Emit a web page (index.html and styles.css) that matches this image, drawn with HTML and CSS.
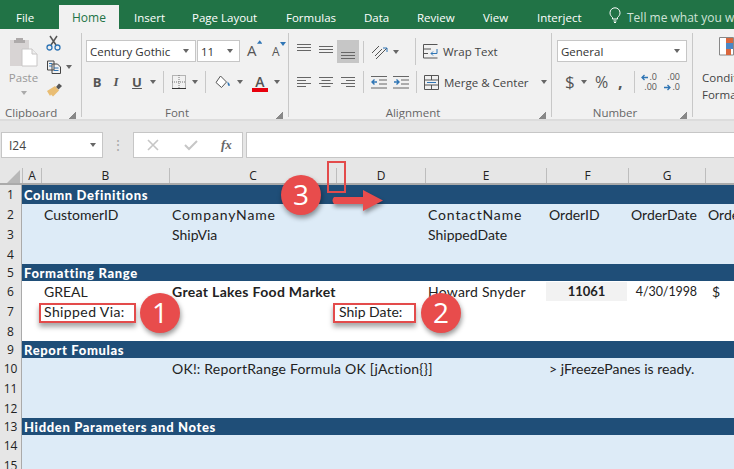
FILE: index.html
```html
<!DOCTYPE html>
<html lang="en">
<head>
<meta charset="utf-8">
<title>Excel worksheet</title>
<link rel="stylesheet" href="styles.css">
</head>
<body>
<div class="app">
  <nav class="tabs">
    <span class="tab tab-file">File</span>
    <span class="tab tab-home">Home</span>
    <span class="tab">Insert</span>
    <span class="tab">Page Layout</span>
    <span class="tab">Formulas</span>
    <span class="tab">Data</span>
    <span class="tab">Review</span>
    <span class="tab">View</span>
    <span class="tab">Interject</span>
    <span class="tab tab-tell">
      <svg width="12" height="16" viewBox="0 0 12 16" fill="none" stroke="#fff"><path d="M3.5 10.5C2 9 1 8 1 5.8A5 5 0 0 1 11 5.8C11 8 10 9 8.500 10.500V12H3.500ZM4.500 14H7.500M5 15.500H7"/></svg>
      <span>Tell me what you want to do</span>
    </span>
  </nav>

  <section class="ribbon">
    <div class="group g-clip">
      <div class="gbody clip-body">
        <div class="paste">
          <svg width="29" height="30" viewBox="0 0 29 30"><path d="M1 3H20V29H1Z" fill="#d8d4d4"/><path d="M7 3V1H14V3H16V6H5V3Z" fill="#aeaaaa"/><path d="M13 12H23L28 17V29H13Z" fill="#fff" stroke="#c8c6c6"/><path d="M23 12V17H28" fill="#eee" stroke="#c8c6c6"/></svg>
          <span class="paste-label">Paste</span>
          <i class="caret caret-pale"></i>
        </div>
        <div class="clip-tools">
          <svg width="15" height="16" viewBox="0 0 15 16" fill="none"><path d="M4 1L10 10M11 1L5 10" stroke="#555" stroke-width="1.500"/><circle cx="3.500" cy="12.500" r="2.500" stroke="#2f75b5" stroke-width="1.300"/><circle cx="11.500" cy="12.500" r="2.500" stroke="#2f75b5" stroke-width="1.300"/></svg>
          <div class="tool-line">
            <svg width="16" height="14" viewBox="0 0 16 14" fill="none" stroke="#444"><path d="M1.500 1H8V10H1.500ZM6 4H11.500L14.500 7V13.500H6Z" fill="#f1f1f1"/><path d="M3 3.500H6M3 6H6M8 8H12.500M8 10.500H12.500" stroke="#2f75b5"/></svg>
            <i class="caret"></i>
          </div>
          <svg class="painter" width="17" height="15" viewBox="0 0 17 15"><path d="M10 5L13 1.500 16 4 12.500 7.500Z" fill="#555"/><path d="M1 9L9 4 13 8.500 7 14.500 5 12.500 4 14 Z" fill="#e9bd73"/></svg>
        </div>
      </div>
      <div class="glabel">Clipboard<i class="launch"></i></div>
    </div>

    <div class="group g-font">
      <div class="gbody stack">
        <div class="rline font-top">
          <div class="combo combo-font"><span>Century Gothic</span><i class="caret"></i></div>
          <div class="combo combo-size"><span>11</span><i class="caret"></i></div>
          <div class="growers">
            <span class="grow">A<svg width="6" height="4" viewBox="0 0 6 4"><path d="M0 4L3 0 6 4Z" fill="#2f75b5"/></svg></span>
            <span class="grow grow-small">A<svg width="6" height="4" viewBox="0 0 6 4"><path d="M0 0L3 4 6 0Z" fill="#2f75b5"/></svg></span>
          </div>
        </div>
        <div class="rline font-bottom">
          <b class="fmt fmt-b">B</b>
          <span class="fmt fmt-i">I</span>
          <span class="fmt fmt-u">U</span>
          <i class="caret"></i>
          <i class="vsep"></i>
          <svg class="icon-borders" width="14" height="14" viewBox="0 0 14 14" fill="none" stroke="#777" stroke-dasharray="1 1"><path d="M.5.500H13.500V13.500H.5ZM7 0V14M0 7H14"/><path d="M0 13.500H14" stroke="#333" stroke-dasharray="none"/></svg>
          <i class="caret"></i>
          <i class="vsep"></i>
          <svg class="icon-fill" width="16" height="14" viewBox="0 0 16 14"><path d="M5.500 1L11.500 7 6.500 12.500 1 7.500Z" fill="#fff" stroke="#555"/><path d="M12.500 6.500C14 8 15.500 9.500 14.500 11 13 11.500 12.500 9 12.500 6.500Z" fill="#2f75b5"/></svg>
          <i class="caret"></i>
          <span class="font-color">A<i></i></span>
          <i class="caret"></i>
        </div>
      </div>
      <div class="glabel">Font<i class="launch"></i></div>
    </div>

    <div class="group g-align">
      <div class="gbody stack">
        <div class="rline align-top">
          <svg class="al al-t" width="14" height="8" viewBox="0 0 14 8" stroke="#666"><path d="M0 .5H14M0 3.500H14M0 6.500H14"/></svg>
          <svg class="al al-mid" width="14" height="8" viewBox="0 0 14 8" stroke="#666"><path d="M0 .5H14M0 3.500H14M0 6.500H14"/></svg>
          <span class="al-active"><svg width="14" height="8" viewBox="0 0 14 8" stroke="#666"><path d="M0 .5H14M0 3.500H14M0 6.500H14"/></svg></span>
          <i class="vsep"></i>
          <svg class="orient" width="18" height="16" viewBox="0 0 18 16" fill="none" stroke="#555"><path d="M1 9L8 2M4 12L11 5M5 15L16 4"/><path d="M16 4V8M16 4H12" stroke="#2f75b5"/></svg>
          <i class="caret"></i>
          <i class="vsep vsep-tall"></i>
          <svg class="wrap-icon" width="15" height="15" viewBox="0 0 15 15" fill="none" stroke="#555"><path d="M.5.500H14.500M.5 5H8M.5 9.500H5M.5 14H14.500M.5.500V14"/><path d="M14 5V9.500H8M10 7.500L8 9.500 10 11.500" stroke="#2f75b5"/></svg>
          <span class="rtext">Wrap Text</span>
        </div>
        <div class="rline align-bottom">
          <svg class="al" width="14" height="11" viewBox="0 0 14 11" stroke="#666"><path d="M0 .5H14M0 3.500H9M0 6.500H14M0 9.500H9"/></svg>
          <svg class="al al-gap" width="14" height="11" viewBox="0 0 14 11" stroke="#666"><path d="M0 .5H14M2.500 3.500H11.500M0 6.500H14M2.500 9.500H11.500"/></svg>
          <svg class="al al-gap" width="14" height="11" viewBox="0 0 14 11" stroke="#666"><path d="M0 .5H14M5 3.500H14M0 6.500H14M5 9.500H14"/></svg>
          <i class="vsep vsep-al"></i>
          <svg class="indent" width="16" height="13" viewBox="0 0 16 13" fill="none" stroke="#666"><path d="M0 .5H16M8 4H16M8 8H16M0 12H16"/><path d="M6 6H1M3.500 3.500L1 6 3.500 8.500" stroke="#2f75b5" stroke-width="1.400"/></svg>
          <svg class="indent indent-2" width="16" height="13" viewBox="0 0 16 13" fill="none" stroke="#666"><path d="M0 .5H16M8 4H16M8 8H16M0 12H16"/><path d="M1 6H6M3.500 3.500L6 6 3.500 8.500" stroke="#2f75b5" stroke-width="1.400"/></svg>
          <i class="vsep vsep-tall2"></i>
          <svg class="wrap-icon" width="15" height="15" viewBox="0 0 15 15" fill="none" stroke="#555"><path d="M.5.500H14.500V14.500H.5ZM.5 5H14.500M.5 10H14.500M7.500.500V5M7.500 10V14.500"/><path d="M3 7.500H12" stroke="#2f75b5"/></svg>
          <span class="rtext">Merge &amp; Center</span>
          <i class="caret caret-merge"></i>
        </div>
      </div>
      <div class="glabel">Alignment<i class="launch"></i></div>
    </div>

    <div class="group g-num">
      <div class="gbody stack">
        <div class="rline num-top"><div class="combo combo-num"><span>General</span><i class="caret"></i></div></div>
        <div class="rline num-bottom">
          <span class="sym sym-dollar">$</span>
          <i class="caret"></i>
          <span class="sym sym-pct">%</span>
          <b class="sym sym-comma">,</b>
          <i class="vsep"></i>
          <span class="dec">
            <span class="dec-line"><svg width="7" height="7" viewBox="0 0 7 7" fill="none" stroke="#2f75b5" stroke-width="1.300"><path d="M7 3.500H1M3.500 1L1 3.500 3.500 6"/></svg>.0</span>
            <span class="dec-line">.00</span>
          </span>
          <span class="dec dec-2">
            <span class="dec-line">.00</span>
            <span class="dec-line"><svg width="7" height="7" viewBox="0 0 7 7" fill="none" stroke="#2f75b5" stroke-width="1.300"><path d="M0 3.500H6M3.500 1L6 3.500 3.500 6"/></svg>.0</span>
          </span>
        </div>
      </div>
      <div class="glabel">Number<i class="launch"></i></div>
    </div>

    <div class="group g-styles">
      <svg class="cf-icon" width="15" height="24" viewBox="0 0 15 24"><path d="M.5.500H14.500V18H.5Z" fill="#fff" stroke="#888"/><path d="M7 1H14V6H7Z" fill="#d9673e"/><path d="M7 6H14V12H7Z" fill="#4a86c5"/><path d="M7 12H12V18H7Z" fill="#d9673e"/></svg>
      <span class="cf-text">Conditional<br>Formatting</span>
    </div>
  </section>

  <section class="formula-bar">
    <div class="namebox"><span>I24</span><i class="caret"></i></div>
    <span class="dots">⋮</span>
    <div class="fx-box">
      <svg width="12" height="12" viewBox="0 0 12 12" stroke="#c6c6c6" stroke-width="1.600"><path d="M1 1L11 11M11 1L1 11"/></svg>
      <svg width="14" height="12" viewBox="0 0 14 12" fill="none" stroke="#c6c6c6" stroke-width="2"><path d="M1 6L5 10 13 2"/></svg>
      <em>fx</em>
    </div>
    <div class="formula-input"></div>
  </section>

  <section class="sheet">
    <div class="row head-row">
      <span class="corner"><svg width="13" height="13" viewBox="0 0 13 13"><path d="M13 0V13H0Z" fill="#b8b8b8"/></svg></span>
      <span class="ch">A</span><span class="ch">B</span><span class="ch">C</span><span class="ch">D</span><span class="ch">E</span><span class="ch">F</span><span class="ch">G</span><span class="ch ch-last"></span>
    </div>
    <div class="row band h19"><span class="rh">1</span><span class="band-title">Column Definitions</span></div>
    <div class="row light">
      <span class="rh">2</span><span class="c c-b">CustomerID</span><span class="c c-c wide">CompanyName</span><span class="c c-e wide">ContactName</span><span class="c c-f">OrderID</span><span class="c c-g">OrderDate</span><span class="c c-h">OrderDetail</span>
    </div>
    <div class="row light"><span class="rh">3</span><span class="c c-c">ShipVia</span><span class="c c-e">ShippedDate</span></div>
    <div class="row light"><span class="rh">4</span></div>
    <div class="row band"><span class="rh">5</span><span class="band-title">Formatting Range</span></div>
    <div class="row">
      <span class="rh">6</span><span class="c c-b">GREAL</span><b class="c c-c c-strong">Great Lakes Food Market</b><span class="c c-e c-name">Howard Snyder</span><b class="c c-f c-id">11061</b><span class="c c-g c-date">4/30/1998</span><span class="c c-h c-usd">$</span>
    </div>
    <div class="row"><span class="rh">7</span><span class="c c-b c-via">Shipped Via:</span><span class="c c-d">Ship Date:</span></div>
    <div class="row"><span class="rh">8</span></div>
    <div class="row band"><span class="rh">9</span><span class="band-title">Report Fomulas</span></div>
    <div class="row light"><span class="rh">10</span><span class="c c-c c-msg">OK!: ReportRange Formula OK [jAction{}]</span><span class="c c-f">&gt; jFreezePanes is ready.</span></div>
    <div class="row light"><span class="rh">11</span></div>
    <div class="row light"><span class="rh">12</span></div>
    <div class="row band"><span class="rh">13</span><span class="band-title">Hidden Parameters and Notes</span></div>
    <div class="row light"><span class="rh">14</span></div>
    <div class="row light"><span class="rh">15</span></div>
  </section>

  <i class="mark mark-via"></i>
  <i class="mark mark-date"></i>
  <i class="mark mark-col"></i>
  <span class="bubble bubble-1">1</span>
  <span class="bubble bubble-2">2</span>
  <span class="bubble bubble-3">3</span>
  <svg class="drag-arrow" width="56" height="30" viewBox="0 0 56 30"><path d="M3 11H32V4L52 14.500 32 25V18H3Q0 14.500 3 11Z" fill="#e84c4c"/></svg>
</div>
</body>
</html>
```
FILE: styles.css
```css
* { box-sizing: border-box; }
html, body { margin: 0; padding: 0; }
body { width: 734px; height: 469px; overflow: hidden; background: #fff; font-family: "Open Sans", "Liberation Sans", sans-serif; }
i { display: block; font-style: normal; }
.app { position: relative; width: 734px; height: 469px; overflow: hidden; display: flex; flex-direction: column; }

.tabs { flex: none; height: 29px; background: #217346; color: #fff; font-size: 11.500px; display: grid; grid-template-columns: 59px 60px 58px 94px 78px 53px 66px 54px 72px 1fr; white-space: nowrap; overflow: hidden; }
.tab { padding: 9px 0 0 15px; line-height: 17px; }
.tab-file { padding-left: 16px; }
.tab-home { margin-top: 5px; padding: 4px 0 0 13px; background: #f1f1f1; color: #217346; font-size: 12px; }
.tab-tell { display: flex; gap: 6px; padding-top: 7px; color: #cfe3d8; font-size: 12px; }
.tab-tell span { padding-top: 2px; }

.ribbon { flex: none; height: 92px; background: #f1f1f1; border-bottom: 2px solid #dcdcdc; display: flex; overflow: hidden; color: #444; }
.group { flex: none; position: relative; display: flex; flex-direction: column; margin-top: 4px; height: 84px; border-right: 1px solid #c8c8c8; }
.gbody { flex: none; height: 72px; }
.glabel { flex: none; font-size: 11.500px; line-height: 14px; text-align: center; color: #666; height: 14px; margin-top: 1px; padding-right: 14px; }
.launch { position: absolute; right: 5px; bottom: -2px; width: 7px; height: 7px; border: 1px solid #888; border-width: 0 1px 1px 0; background: linear-gradient(135deg, transparent 55%, #888 55%); }
.stack { display: flex; flex-direction: column; }
.rline { display: flex; align-items: center; }
.caret { flex: none; width: 0; height: 0; border: 3.500px solid transparent; border-top: 4px solid #666; border-bottom: 0; }
.caret-pale { border-top-color: #aaa; }
.vsep { flex: none; width: 1px; height: 22px; background: #c8c8c8; }
.combo { display: flex; align-items: center; justify-content: space-between; height: 22px; background: #fff; border: 1px solid #c6c6c6; font-size: 11.500px; color: #333; padding: 0 6px 0 3px; }

.g-clip { width: 82px; }
.clip-body { display: flex; padding: 4px 0 0 9px; }
.paste { width: 29px; display: flex; flex-direction: column; align-items: center; }
.paste-label { font-size: 11.500px; line-height: 16px; color: #999; margin-top: 3px; }
.paste .caret { margin-top: 5px; }
.clip-tools { margin: -2px 0 0 8px; display: flex; flex-direction: column; align-items: flex-start; gap: 9px; }
.tool-line { display: flex; align-items: center; gap: 4px; }
.painter { margin-top: -1px; }
.g-clip .glabel { text-align: left; padding: 0 0 0 5px; }

.g-font { width: 207px; }
.g-font .glabel { padding-right: 16px; }
.font-top { padding: 7px 0 0 4px; gap: 1px; }
.combo-font { width: 110px; }
.combo-size { width: 43px; }
.growers { display: flex; gap: 10px; margin-left: 6px; }
.grow { display: flex; align-items: flex-start; font-size: 15px; line-height: 20px; color: #555; width: 15px; }
.grow-small { font-size: 12px; padding-top: 2px; }
.font-bottom { height: 40px; padding-left: 10px; }
.fmt { width: 22px; text-align: center; font-size: 13px; color: #555; font-weight: 700; }
.fmt-b { width: 10px; }
.fmt-i { font-style: italic; font-family: "Liberation Serif", serif; margin-left: 7px; width: 14px; }
.fmt-u { text-decoration: underline; width: 14px; margin-left: 7px; }
.font-bottom .caret { margin-left: 6px; }
.font-bottom .vsep { margin-left: 7px; }
.icon-borders { margin-left: 8px; }
.icon-fill { margin-left: 9px; }
.font-color { position: relative; margin-left: 9px; width: 16px; text-align: center; font-size: 14px; line-height: 17px; font-weight: 600; color: #555; }
.font-color i { height: 4px; background: #e8000d; margin-top: -2px; }

.g-align { width: 263px; }
.align-top { height: 30px; padding: 7px 0 0 8px; }
.al { flex: none; }
.al-t { align-self: flex-start; margin-top: 4px; }
.al-mid { align-self: flex-start; margin: 6px 0 0 8px; }
.al-active { width: 22px; height: 23px; margin-left: 4px; background: #c6c6c6; display: flex; align-items: flex-end; justify-content: center; padding-bottom: 3px; flex: none; }
.al-active svg { display: block; }
.align-top .vsep { margin-left: 4px; }
.orient { margin-left: 7px; }
.align-top .caret { margin-left: 4px; }
.align-top .vsep-tall { margin-left: 16px; height: 27px; }
.wrap-icon { margin-left: 7px; flex: none; }
.rtext { margin-left: 5px; font-size: 11.500px; color: #444; white-space: nowrap; }
.align-bottom { padding-left: 8px; height: 38px; }
.al-gap { margin-left: 8px; }
.vsep-al { margin-left: 8px; }
.indent { margin-left: 7px; flex: none; }
.indent-2 { margin-left: 6px; }
.vsep-tall2 { margin-left: 7px; height: 22px; }
.caret-merge { margin-left: 12px; }

.g-num { width: 141px; }
.num-top { padding: 7px 0 0 5px; }
.combo-num { width: 130px; height: 22px; }
.num-bottom { height: 40px; padding-left: 13px; }
.sym { font-size: 16px; color: #555; line-height: 22px; }
.sym-dollar { width: 9px; font-size: 17px; }
.num-bottom .caret { margin-left: 7px; }
.sym-pct { margin-left: 8px; width: 14px; }
.sym-comma { margin-left: 9px; width: 5px; }
.num-bottom .vsep { margin-left: 11px; }
.dec { display: flex; flex-direction: column; align-items: flex-end; width: 15px; margin-left: 7px; font-size: 9px; line-height: 10px; color: #555; }
.dec-2 { margin-left: 8px; }
.dec-line { display: flex; align-items: center; gap: 1px; }

.g-styles { border: 0; width: 60px; padding-left: 9px; font-size: 11.500px; line-height: 17px; color: #444; }
.cf-icon { margin: 4px 0 0 17px; flex: none; }
.cf-text { margin-top: 8px; white-space: nowrap; }

.formula-bar { flex: none; height: 37px; background: #e6e6e6; display: flex; padding-top: 11px; }
.namebox { width: 102px; height: 26px; margin-left: 1px; background: #fff; border: 1px solid #c6c6c6; display: flex; align-items: center; justify-content: space-between; padding: 0 6px 0 7px; font-size: 12px; color: #444; }
.dots { width: 30px; text-align: center; color: #aaa; font-size: 14px; line-height: 26px; }
.fx-box { width: 110px; height: 26px; background: #fff; border: 1px solid #c6c6c6; display: flex; align-items: center; gap: 25px; padding-left: 13px; }
.fx-box em { font-family: "Liberation Serif", serif; font-size: 13px; font-weight: 700; color: #666; margin-left: -2px; }
.formula-input { flex: 1; height: 26px; margin-left: 3px; background: #fff; border: 1px solid #c6c6c6; border-right: 0; }

.sheet { flex: none; padding-top: 10px; background: #e6e6e6; font-family: "Lato", "Liberation Sans", sans-serif; font-size: 14px; color: #222; }
.row { display: grid; grid-template-columns: 22px 19px 128px 167px 89px 121px 82px 77px 29px; height: 20px; background: #fff; line-height: 21px; white-space: nowrap; overflow: hidden; }
.light { background: #ddebf7; }
.band { height: 17px; line-height: 18px; background: #1f4e78; color: #fff; }
.h19 { height: 19px; line-height: 20px; }
.band-title { grid-column: 2 / -1; padding-left: 2px; font-weight: 900; font-size: 13px; letter-spacing: .65px; }
.head-row { height: 17px; line-height: 16px; background: #e6e6e6; border-bottom: 2px solid #aaa; font-family: "Open Sans", sans-serif; font-size: 12px; }
.corner { display: flex; align-items: flex-end; justify-content: flex-end; padding: 0 2px 1px 0; }
.ch { text-align: center; border-left: 1px solid #bdbdbd; color: #222; }
.rh { grid-column: 1; background: #e6e6e6; border-right: 1px solid #aaa; border-bottom: 1px solid #bdbdbd; text-align: center; font-family: "Open Sans", sans-serif; font-size: 12px; color: #222; }
.c { padding-left: 3px; overflow: visible; }
.c-b { grid-column: 3; }
.c-c { grid-column: 4; }
.c-d { grid-column: 5; padding-left: 3px; }
.c-e { grid-column: 6; padding-left: 3px; }
.c-f { grid-column: 7; padding-left: 3px; }
.c-g { grid-column: 8; padding-left: 3px; }
.c-h { grid-column: 9; padding-left: 3px; }
.wide { letter-spacing: .85px; }
.c-strong { letter-spacing: .32px; }
.c-name { letter-spacing: .22px; }
.c-via { letter-spacing: .4px; }
.c-msg { letter-spacing: .2px; }
.c-id { background: #f2f2f2; margin: 1px 1px 0 0; line-height: 18px; text-align: center; padding: 0; font-size: 13px; }
.c-date { text-align: right; padding-right: 8px; font-size: 12.500px; letter-spacing: -.1px; }
.c-usd { padding-left: 7px; }

.mark { position: absolute; border: 2px solid #e34b4b; }
.mark-via { left: 39px; top: 303px; width: 97px; height: 20px; box-shadow: 0 4px 5px rgba(0,0,0,.35); }
.mark-date { left: 333px; top: 303px; width: 83px; height: 20px; box-shadow: 0 4px 5px rgba(0,0,0,.35); }
.mark-col { left: 327px; top: 161px; width: 19px; height: 32px; }
.bubble { position: absolute; width: 40px; height: 40px; border-radius: 50%; background: #e84c4c; color: #fff; font-family: "Open Sans", sans-serif; font-size: 28px; line-height: 39px; text-align: center; box-shadow: 1px 3px 5px rgba(0,0,0,.4); }
.bubble-1 { left: 140px; top: 293px; }
.bubble-2 { left: 421px; top: 293px; }
.bubble-3 { left: 281px; top: 175px; }
.drag-arrow { position: absolute; left: 331px; top: 186px; filter: drop-shadow(1px 3px 2px rgba(0,0,0,.4)); }
```
